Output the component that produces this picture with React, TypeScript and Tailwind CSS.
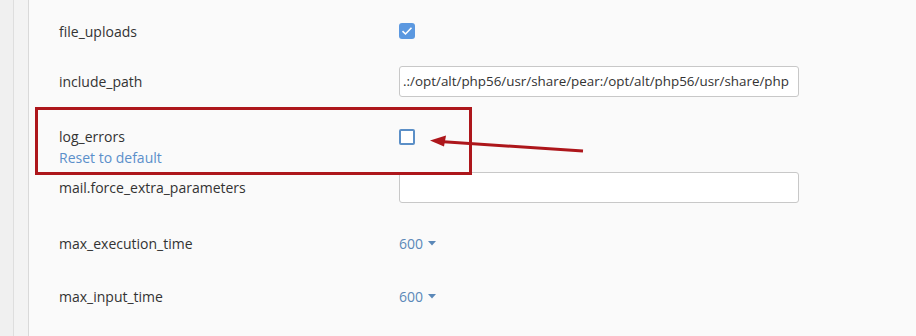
import React from "react";

const font = { fontFamily: '"Open Sans", "Liberation Sans", sans-serif' };

function Caret() {
  return (
    <svg width="8" height="5" viewBox="0 0 8 5" className="ml-[5px] mt-[1px]">
      <path d="M0 0 L8 0 L4 4.5 Z" fill="#5b88b8" />
    </svg>
  );
}

export default function App() {
  return (
    <div className="relative w-[916px] h-[336px] overflow-hidden flex bg-[#fafafa] text-[14px] text-[#333]" style={font}>
      <div className="w-[13px] bg-[#f0f0f0]" />
      <div className="w-[1px] bg-[#dedede]" />
      <div className="w-[14px] bg-[#f3f3f3]" />
      <div className="w-[1px] bg-[#d9d9d9]" />
      <div className="flex-1 pl-[30px] pt-[6px] flex flex-col">
        <div className="flex items-center h-[50px]">
          <div className="w-[340px]">file_uploads</div>
          <div className="w-[16px] h-[16px] rounded-[3px] bg-[#5b98e0] flex items-center justify-center">
            <svg width="12" height="10" viewBox="0 0 12 10">
              <path d="M1.5 5.2 L4.5 8 L10.5 1.8" stroke="#fff" strokeWidth="1.6" fill="none" />
            </svg>
          </div>
        </div>
        <div className="flex items-center h-[50px]">
          <div className="w-[340px]">include_path</div>
          <div className="w-[400px] h-[31px] border border-[#c8c8c8] rounded-[3px] bg-white flex items-center pl-[3px] text-[13.4px] text-[#333] whitespace-nowrap overflow-hidden">
            .:/opt/alt/php56/usr/share/pear:/opt/alt/php56/usr/share/php
          </div>
        </div>
        <div className="flex h-[66px] pt-[20px]">
          <div className="w-[340px] leading-[21px]">
            <div>log_errors</div>
            <div className="text-[#5b8fca]">Reset to default</div>
          </div>
          <div className="mt-[3px] w-[16px] h-[16px] rounded-[2px] border-2 border-[#5b8fc7] bg-white" />
        </div>
        <div className="flex items-center h-[31px]">
          <div className="w-[340px]">mail.force_extra_parameters</div>
          <div className="w-[400px] h-[31px] border border-[#c8c8c8] rounded-[3px] bg-white" />
        </div>
        <div className="flex items-center h-[50px] mt-[15px]">
          <div className="w-[340px]">max_execution_time</div>
          <div className="flex items-center text-[#5b88b8]">600<Caret /></div>
        </div>
        <div className="flex items-center h-[50px] mt-[3px]">
          <div className="w-[340px]">max_input_time</div>
          <div className="flex items-center text-[#5b88b8]">600<Caret /></div>
        </div>
      </div>
      <div className="absolute left-[35px] top-[107px] w-[437px] h-[68px] border-[3px] border-[#ad161b]" />
      <svg className="absolute left-0 top-0" width="916" height="336">
        <line x1="583" y1="151" x2="440" y2="141.5" stroke="#ad161b" strokeWidth="3" />
        <path d="M430 140.5 L446 135.5 L444 146.5 Z" fill="#ad161b" />
      </svg>
    </div>
  );
}
